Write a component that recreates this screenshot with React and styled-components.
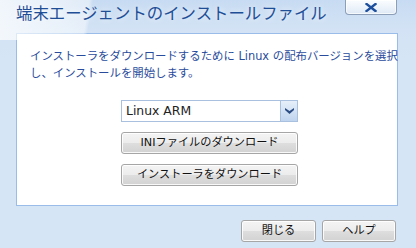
import React from 'react';
import styled, { createGlobalStyle } from 'styled-components';

const GlobalStyle = createGlobalStyle`
  html, body {
    margin: 0;
    padding: 0;
    background: #d6e4f5;
  }
  body {
    font-family: "DejaVu Sans", "Noto Sans CJK JP", sans-serif;
  }
`;

const Dialog = styled.div`
  position: relative;
  width: 416px;
  height: 248px;
  display: flex;
  flex-direction: column;
  overflow: hidden;
  background: linear-gradient(to bottom, #c7dbf2 0, #d3e3f5 30px, #d6e5f5 60px, #d6e5f5 100%);

  &::before {
    content: '';
    position: absolute;
    top: 0;
    left: 0;
    width: 140px;
    height: 40px;
    pointer-events: none;
    background: linear-gradient(100deg, rgba(255, 255, 255, 0.75) 0, rgba(255, 255, 255, 0.45) 88px, rgba(255, 255, 255, 0) 92px);
  }
`;

const TitleBar = styled.div`
  position: relative;
  height: 33px;
  display: flex;
  justify-content: space-between;
  align-items: flex-start;
  padding: 0 19px 0 16px;
`;

const Title = styled.div`
  padding-top: 2px;
  font-family: "Noto Sans CJK JP", sans-serif;
  font-size: 16.4px;
  line-height: 20px;
  color: #1f4e96;
  text-shadow: 0 0 6px rgba(255, 255, 255, 0.9);
  white-space: nowrap;
`;

const CloseButton = styled.button`
  width: 52px;
  height: 15px;
  margin: 0;
  padding: 0;
  display: flex;
  align-items: center;
  justify-content: center;
  border: 1px solid #8d9fb8;
  border-top: none;
  border-radius: 0 0 4px 4px;
  background: linear-gradient(to bottom, #fbfdff 0, #eef4fb 50%, #dde8f5 100%);
  box-shadow: inset 0 0 0 1px rgba(255, 255, 255, 0.7);
`;

const Panel = styled.div`
  height: 173px;
  box-sizing: border-box;
  margin: 0 18px 0 16px;
  padding: 14px 8px 0 13px;
  background: #ffffff;
  border: 1px solid #99bce9;
  display: flex;
  flex-direction: column;
`;

const Message = styled.p`
  margin: 0;
  font-size: 11.4px;
  line-height: 17px;
  color: #2a4c9c;
`;

const Line = styled.span`
  display: block;
  white-space: nowrap;
`;

const Controls = styled.div`
  margin-top: 18px;
  display: flex;
  flex-direction: column;
  align-items: center;
  gap: 10px;
`;

const SelectBox = styled.div`
  width: 177px;
  height: 22px;
  box-sizing: border-box;
  display: flex;
  border: 1px solid #a9c0de;
  background: #fff;
`;

const SelectValue = styled.div`
  flex: 1;
  padding-left: 4px;
  font-size: 12.4px;
  line-height: 20px;
  color: #222;
`;

const SelectArrow = styled.div`
  width: 16px;
  display: flex;
  align-items: center;
  justify-content: center;
  border-left: 1px solid #a9c0de;
  background: linear-gradient(to bottom, #e6eff9 0, #d3e2f4 50%, #bfd4ee 100%);
`;

const Button = styled.button`
  width: ${p => p.width}px;
  height: 22px;
  box-sizing: border-box;
  margin: 0;
  padding: 0;
  font-family: "DejaVu Sans", "Noto Sans CJK JP", sans-serif;
  font-size: 11.2px;
  line-height: 20px;
  color: #111;
  border: 1px solid #a6a6a6;
  border-radius: 3px;
  background: linear-gradient(to bottom, #f4f4f4 0, #ececec 50%, #dedede 50%, #d2d2d2 100%);
  box-shadow: inset 0 0 0 1px rgba(255, 255, 255, 0.85);
`;

const Footer = styled.div`
  display: flex;
  justify-content: flex-end;
  gap: 6px;
  padding: 14px 20px 0 0;
`;

export default function App() {
  return (
    <>
      <GlobalStyle />
      <Dialog>
        <TitleBar>
          <Title>端末エージェントのインストールファイル</Title>
          <CloseButton aria-label="閉じる">
            <svg width="12" height="9" viewBox="0 0 12 9">
              <path d="M1.5 1 L10.5 8 M10.5 1 L1.5 8" stroke="#1d4f9d" strokeWidth="2.4" strokeLinecap="square" />
            </svg>
          </CloseButton>
        </TitleBar>
        <Panel>
          <Message>
            <Line>インストーラをダウンロードするために Linux の配布バージョンを選択</Line>
            <Line>し、インストールを開始します。</Line>
          </Message>
          <Controls>
            <SelectBox>
              <SelectValue>Linux ARM</SelectValue>
              <SelectArrow>
                <svg width="9" height="6" viewBox="0 0 9 6">
                  <path d="M0 0 L4.5 3 L9 0 L9 2 L4.5 6 L0 2 Z" fill="#2c4d84" />
                </svg>
              </SelectArrow>
            </SelectBox>
            <Button width={177}>INIファイルのダウンロード</Button>
            <Button width={177}>インストーラをダウンロード</Button>
          </Controls>
        </Panel>
        <Footer>
          <Button width={75}>閉じる</Button>
          <Button width={74}>ヘルプ</Button>
        </Footer>
      </Dialog>
    </>
  );
}
